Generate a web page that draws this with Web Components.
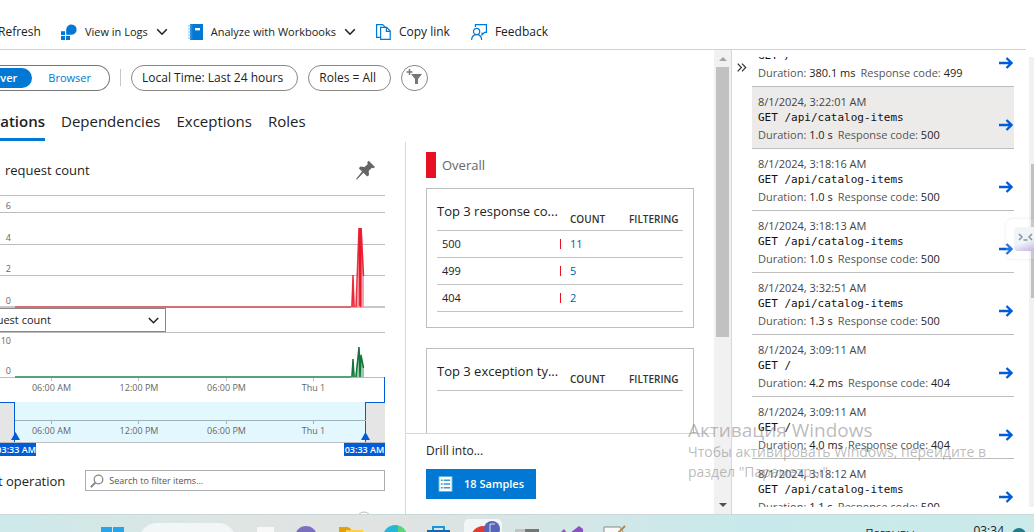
<!DOCTYPE html>
<html lang="en">
<head>
<meta charset="utf-8">
<title>Performance - Application Insights</title>
<style>
  html, body { margin: 0; height: 100%; }
  body { font: 12px/16px "Open Sans", "Noto Sans", sans-serif; color: #222; background: #fff; overflow: hidden; }
</style>
</head>
<body>
<perf-page></perf-page>

<script>
const define = (name, html, init) => customElements.define(name, class extends HTMLElement {
  constructor() {
    super();
    const t = document.createElement('template');
    t.innerHTML = html;
    this.attachShadow({ mode: 'open' }).appendChild(t.content.cloneNode(true));
  }
  connectedCallback() { if (init) init(this, this.shadowRoot); }
});

/* Command bar button: icon slot, label, optional chevron */
define('cmd-button', `
<style>
  :host { display: block; }
  button { display: flex; align-items: center; gap: 8px; padding: 0; border: 0; background: none; font: inherit; color: #222; white-space: nowrap; }
  svg { display: none; }
  :host([menu]) svg { display: block; }
  :host([menu]) { font-size: 11px; }
</style>
<button type="button"><slot name="icon"></slot><slot></slot>
<svg width="12" height="8" viewBox="0 0 12 8"><path d="M1.2 1.3 6 6.2 10.8 1.3" fill="none" stroke="#222" stroke-width="1.6"/></svg></button>`);

define('cmd-bar', `
<style>
  :host { display: block; padding-top: 15px; margin-right: 8px; border-bottom: 1px solid #d2d2d2; }
  nav { display: flex; align-items: center; height: 34px; gap: 20px; margin-left: -2px; }
  svg { display: block; }
  .gap { margin-left: 1px; }
</style>
<nav>
  <cmd-button>Refresh</cmd-button>
  <cmd-button menu><svg slot="icon" width="16" height="16" viewBox="0 0 16 16" fill="#0078d4"><path d="M5.2 5.6A5.2 5.2 0 1 1 10 10.8H5.2z"/><path d="M0 7.2h4V11H0zM0 12h4v4H0zM5 12h4v4H5z"/></svg>View in Logs</cmd-button>
  <cmd-button menu><svg slot="icon" width="15" height="16" viewBox="0 0 15 16"><path d="M2 0h13v16H2z" fill="#0078d4"/><path d="M2 0h2.5v16H2z" fill="#1f88d9"/><path d="M0 2h3M0 5h3M0 8h3M0 11h3M0 14h3" stroke="#6bb6ee" stroke-width="1.2"/><path d="M7 4h5v2.4H7z" fill="#fff"/></svg>Analyze with Workbooks</cmd-button>
  <cmd-button><svg slot="icon" width="15" height="16" viewBox="0 0 15 16" fill="none" stroke="#0078d4" stroke-width="1.2"><path d="M4.5 13.4H.6V.6h6l2.6 2.6"/><path d="M4.6 3.4h6l3.6 3.7v8.3H4.6z"/><path d="M10.4 3.6v3.7h3.8"/></svg>Copy link</cmd-button>
  <cmd-button class="gap"><svg slot="icon" width="16" height="16" viewBox="0 0 16 16" fill="none" stroke="#0078d4" stroke-width="1.2"><path d="M4.4 3V.6h11v7.8h-1.8l-2.6 2.4V8.4"/><circle cx="5.6" cy="7.4" r="3.1"/><path d="M.6 16c.2-3.3 2-5.4 5-5.4s4.900 2.100 5.100 5.400"/></svg>Feedback</cmd-button>
</nav>`);

/* Rounded filter pill */
define('filter-pill', `
<style>
  :host { display: block; }
  button { height: 26px; padding: 0 14px 0 10px; border: 1px solid #8a8886; border-radius: 13px; background: #fff; font: inherit; color: #222; white-space: nowrap; display: flex; align-items: center; }
  :host([round]) button { width: 27px; padding: 0 4px; }
</style>
<button type="button"><slot></slot></button>`);

define('filter-bar', `
<style>
  :host { display: flex; align-items: center; height: 27px; }
  .seg { display: flex; justify-content: flex-end; align-items: center; box-sizing: border-box; width: 110px; height: 26px; padding-right: 2px; border: 1px solid #797775; border-left: 0; border-radius: 0 13px 13px 0; }
  .seg button { height: 20px; border: 0; border-radius: 10px; font: inherit; font-size: 11px; color: #0078d4; background: none; padding: 0 16px; flex: none; }
  .seg button.on { background: #0078d4; color: #fff; font-weight: 600; padding: 0 15px; }
  .bar { width: 1px; height: 17px; background: #c8c6c4; margin: 0 10px; }
  .pills { display: flex; gap: 10px; }
</style>
<div class="seg"><button type="button" class="on">Server</button><button type="button">Browser</button></div>
<div class="bar"></div>
<div class="pills">
  <filter-pill>Local Time: Last 24 hours</filter-pill>
  <filter-pill>Roles = All</filter-pill>
  <filter-pill round aria-label="Add filter"><svg width="17" height="17" viewBox="0 0 17 17" fill="#797775"><path d="M5 5h11l-4 5v5H9v-5z"/><path d="M3.500 0v6M.5 3h6" stroke="#797775" stroke-width="1.500"/></svg></filter-pill>
</div>`);

define('tab-strip', `
<style>
  :host { display: flex; gap: 16px; height: 33px; font-size: 15px; line-height: 24px; }
  a { color: #222; text-decoration: none; height: 29px; border-bottom: 3px solid transparent; }
  a.on { width: 45px; display: flex; justify-content: flex-end; font-weight: 600; border-color: #0078d4; }
</style>
<a class="on" href="#operations">Operations</a><a href="#dependencies">Dependencies</a><a href="#exceptions">Exceptions</a><a href="#roles">Roles</a>`);

/* Charts, time brush and search */
define('charts-panel', `
<style>
  :host { display: block; flex: 1; min-width: 0; padding-right: 20px; overflow: hidden; }
  header { display: flex; align-items: center; justify-content: space-between; box-sizing: border-box; height: 54px; padding: 2px 9px 0 5px; font-size: 13px; border-bottom: 1px solid #bdbdbd; }
  .plot { display: grid; }
  .plot > * { grid-area: 1 / 1; }
  .plot svg { width: 100%; display: block; }
  .big svg { height: 112px; }
  .small { border-top: 1px solid #bdbdbd; }
  .small svg { height: 49px; }
  .y { display: flex; flex-direction: column; justify-content: space-between; width: 11px; text-align: right; align-items: flex-end; font-size: 9px; line-height: 12px; color: #666; }
  .big .y { box-sizing: border-box; padding-top: 4px; height: 111px; }
  .small .y { padding: 2px 0 0; height: 42px; }
  select { display: block; appearance: none; box-sizing: border-box; width: 190px; height: 24px; margin-left: -24px; padding: 0 24px 0 0; border: 1px solid #8a8886; border-radius: 0; font: inherit; color: #222;
    font-size: 11px; background: #fff; }
  .pick { display: grid; width: 166px; }
  .pick > * { grid-area: 1 / 1; }
  .pick svg { justify-self: end; align-self: center; margin-right: 7px; pointer-events: none; }
  .x { display: grid; grid-template-columns: 8fr 87fr 88fr 87fr 87fr 28fr; font-size: 9px; line-height: 12px; color: #666; text-align: center; white-space: nowrap; }
  .x span:first-child { grid-column: 2; }
  .brush { display: grid; grid-template-columns: 15px 1fr 20px; height: 40px; border-bottom: 1px solid #bdbdbd; }
  .brush > div { grid-row: 1; }
  .sel { grid-column: 2; background: #e3f7fe; }
  .l, .r { background: #e5e5e5; border-top: 1px solid #015cda; }
  .l { grid-column: 1; border-right: 1px solid #015cda; }
  .r { grid-column: 3; border-left: 1px solid #015cda; }
  .axis { grid-column: 1 / 4; display: flex; flex-direction: column; justify-content: flex-end; padding-bottom: 5px; }
  .axis svg { display: block; width: 100%; height: 40px; margin-bottom: -17px; }
  .tags { display: flex; justify-content: space-between; height: 13px; }
  .tags span { background: #015cda; color: #fff; font-weight: 600; font-size: 9px; line-height: 13px; width: 41px; text-align: center; white-space: nowrap; }
  .tags span:first-child { width: 36px; display: flex; justify-content: flex-end; }
  .search { display: flex; align-items: center; gap: 20px; margin: 14px 0 0 -2px; font-size: 13px; }
  .box { flex: 1; display: flex; align-items: center; gap: 5px; box-sizing: border-box; height: 21px; border: 1px solid #acacac; padding: 0 4px; }
  .box svg { flex: none; }
  input { flex: 1; min-width: 0; border: 0; padding: 0; outline: 0; font: inherit; font-size: 9px; background: none; }
  input::placeholder { color: #555; opacity: 1; }
  .peek { display: flex; justify-content: flex-end; margin: 20px 13px 0 0; }
</style>
<header>request count
  <svg width="20" height="20" viewBox="0 0 20 20" fill="#666"><path d="M12.700.700 19 7l-1.500 1.300-1.600-.6-3.200 3.200.3 4-1.800 1.700-3.800-3.900L1 19.500 0 19l6-7.400-3.200-3.300 1.600-1.700 4.200.5 3.200-3.200-.6-1.700z"/></svg></header>
<div class="plot big">
  <svg viewBox="0 0 385 112" preserveAspectRatio="none">
    <g fill="#bdbdbd"><path d="M0 16h385v1H0zM0 48h385v1H0zM0 79h385v1H0z"/><path d="M0 110h385v2H0z" fill="#c8c8c8"/></g>
    <path d="M15 110h337v2H15z" fill="#d96b74"/>
    <path d="M351 112 353 79 355 112 357 104 359 32 362 32 364 79V112z" fill="#f5a0aa"/>
    <path d="M352 111 353 79 354 111M356 111 359 32 360.500 111 361 32 363.500 80" fill="none" stroke="#e81123" stroke-width="1.500" opacity=".85"/>
    <path d="M360 32v78" stroke="#e81123" stroke-width="2.500" opacity=".7"/>
  </svg>
  <div class="y"><span>6</span><span>4</span><span>2</span><span>0</span></div>
</div>
<div class="pick">
  <select aria-label="Metric"><option>Request count</option></select>
  <svg width="11" height="7" viewBox="0 0 11 7"><path d="M.8 1 5.500 5.700 10.200 1" fill="none" stroke="#222" stroke-width="1.500"/></svg>
</div>
<div class="plot small">
  <svg viewBox="0 0 385 49" preserveAspectRatio="none">
    <path d="M0 44h385v1H0zM51 45h1v3h-1zM138 45h1v3h-1zM226 45h1v3h-1zM313 45h1v3h-1z" fill="#bdbdbd"/>
    <path d="M15 43h337v2H15z" fill="#56a374"/>
    <path d="M351 45 353 26 355 45 359 14 361 24 364 36V45z" fill="#9bc9ac"/>
    <path d="M352 44 353 26 354 44M356 44 359 14 360 44 361 22 363.500 35" fill="none" stroke="#10763a" stroke-width="1.500"/>
  </svg>
  <div class="y"><span>10</span><span>0</span></div>
</div>
<div class="x"><span>06:00 AM</span><span>12:00 PM</span><span>06:00 PM</span><span>Thu 1</span></div>
<svg width="100%" height="8" viewBox="0 0 385 8" preserveAspectRatio="xMaxYMin meet" style="display:block;height:8px;overflow:visible"><path d="M384.500-17V8.500H365" fill="none" stroke="#015cda"/></svg>
<div class="brush">
  <div class="l"></div><div class="sel"></div><div class="r"></div>
  <div class="axis">
    <svg viewBox="0 0 385 40" preserveAspectRatio="none"><path d="M15 18h351v1H15zM51 19h1v3h-1zM138 19h1v3h-1zM226 19h1v3h-1zM313 19h1v3h-1z" fill="#9db4bb"/><path d="M11 38 15.500 30 20 38zM361 38 365.500 30 370 38z" fill="#015cda"/></svg>
    <div class="x"><span>06:00 AM</span><span>12:00 PM</span><span>06:00 PM</span><span>Thu 1</span></div>
  </div>
</div>
<div class="tags"><span>03:33 AM</span><span>03:33 AM</span></div>
<div class="search"><label for="q">t operation</label>
  <div class="box"><svg width="14" height="14" viewBox="0 0 14 14" fill="none" stroke="#888"><circle cx="8.500" cy="5.500" r="4.300" stroke-width="1.300"/><path d="M5.400 8.600.8 13.200" stroke-width="2"/></svg><input id="q" type="search" placeholder="Search to filter items..."></div></div>
<div class="peek"><svg width="16" height="16" viewBox="0 0 16 16"><circle cx="8" cy="8" r="7" fill="none" stroke="#bbb"/></svg></div>`);

/* Card with a top-3 table */
define('top-card', `
<style>
  :host { display: block; border: 1px solid #bdbdbd; padding: 3px 10px 15px; }
  table { width: 100%; border-collapse: collapse; table-layout: fixed; font-size: 11px; }
  th { text-align: left; padding: 0; height: 32px; font-size: 10px; font-weight: 600; color: #333; vertical-align: bottom; border-bottom: 1px solid #c4c4c4; line-height: 22px; }
  th:first-child { width: 133px; font-size: 13px; font-weight: 400; color: #222; line-height: 38px; white-space: nowrap; }
  th:last-child { width: 54px; }
  td { height: 26px; padding: 0; border-bottom: 1px solid #c4c4c4; }
  td:first-child { padding-left: 5px; }
  td div { display: flex; justify-content: space-between; align-items: center; }
  i { width: 1px; height: 10px; background: #e81123; margin-right: 9px; }
  a { color: #015cb0; text-decoration: none; }
</style>
<table><thead><tr><th></th><th>COUNT</th><th>FILTERING</th></tr></thead><tbody></tbody></table>`,
(host, root) => {
  root.querySelector('th').textContent = host.getAttribute('heading');
  root.querySelector('tbody').innerHTML = (host.getAttribute('rows') || '').split(',').filter(Boolean).map(r => {
    const [code, n] = r.split(':');
    return `<tr><td><div>${code}<i></i></div></td><td><a href="#${code}">${n}</a></td><td></td></tr>`;
  }).join('');
});

define('insight-panel', `
<style>
  :host { display: flex; flex-direction: column; width: 308px; border-left: 1px solid #d8d8d8; }
  .scroll { flex: 1; min-height: 0; overflow: hidden; padding: 10px 20px 0; }
  .overall { display: flex; align-items: center; gap: 6px; font-size: 13px; color: #666; margin-bottom: 10px; }
  .overall i { width: 10px; height: 26px; background: #e81123; }
  top-card { margin-bottom: 20px; }
  .tall { height: 160px; }
  footer { border-top: 1px solid #d8d8d8; padding: 9px 20px 15px; }
  button { display: flex; align-items: center; gap: 11px; height: 30px; width: 110px; margin-top: 10px; padding: 0 12px; border: 0; background: #0078d4; color: #fff; font: inherit; font-size: 11px; font-weight: 600; white-space: nowrap; }
</style>
<div class="scroll">
  <div class="overall"><i></i>Overall</div>
  <top-card heading="Top 3 response co..." rows="500:11,499:5,404:2"></top-card>
  <top-card class="tall" heading="Top 3 exception ty..."></top-card>
</div>
<footer>Drill into...
  <button type="button"><svg width="16" height="18" viewBox="0 0 16 18"><path d="M1 1h14v16H1z" fill="#fff" stroke="#59b4d9"/><path d="M3 5h2M3 9h2M3 13h2M6 5h7M6 9h7M6 13h7" stroke="#3a9bd0" stroke-width="1.500"/></svg>18 Samples</button>
</footer>`);

define('scroll-track', `
<style>
  :host { display: flex; flex-direction: column; align-items: center; box-sizing: border-box; width: 17px; background: #f1f1f1; padding: 6px 0; }
  div { width: 13px; height: 270px; background: #c1c1c1; margin: 5px 0 auto; }
  svg { display: block; }
</style>
<svg width="8" height="6" viewBox="0 0 8 6"><path d="M0 5 4 1 8 5z" fill="#a3a3a3"/></svg><div></div>
<svg width="8" height="6" viewBox="0 0 8 6"><path d="M0 1h8L4 5z" fill="#505050"/></svg>`);

/* One sampled request */
define('sample-row', `
<style>
  :host { display: flex; align-items: center; box-sizing: border-box; height: 62px; padding: 6px 1px 5px 6px; border-bottom: 1px solid #bdbdbd; font-size: 11px; color: #222; }
  :host([selected]) { background: #edebe9; }
  .body { flex: 1; }
  time, code, .meta { display: block; height: 16px; line-height: 16px; white-space: pre; }
  span { color: #555; }
  time { color: #444; }
  code { font-family: "DejaVu Sans Mono", monospace; color: #111; height: 17px; line-height: 15px; }
  .meta { display: flex; gap: 5px; }
  b { font-weight: 400; }
  a { display: block; padding-top: 14px; }
  svg { display: block; }
</style>
<div class="body"><time></time><code></code><div class="meta"><div><span>Duration:</span> <b></b></div><div><span>Response code:</span> <b></b></div></div></div>
<a href="#sample" aria-label="Open sample"><svg width="14" height="12" viewBox="0 0 14 12"><path d="M0 6h12M7.500 1 12.500 6 7.500 11" fill="none" stroke="#015cda" stroke-width="2.300"/></svg></a>`,
(host, root) => {
  const [time, op, dur, code] = host.getAttribute('data').split('|');
  root.querySelector('time').textContent = time;
  root.querySelector('code').textContent = op;
  const b = root.querySelectorAll('b');
  b[0].textContent = dur;
  b[1].textContent = code;
});

define('sample-list', `
<style>
  :host { display: flex; box-sizing: border-box; width: 303px; border-left: 1px solid #d8d8d8; padding: 7px 0 7px 3px; }
  .fold { align-self: flex-start; width: 13px; margin: 6px 4px 0 0; padding: 0; border: 0; background: none; font-size: 0; }
  .view { flex: 1; overflow: hidden; }
  .rows { margin-top: -32px; }
  .rail { width: 5px; margin-left: 15px; background: #f1f1f1; }
  .rail div { height: 134px; margin: 107px 0 0 2px; background: #c1c1c1; }
</style>
<button class="fold" type="button" aria-label="Collapse"><svg width="10" height="9" viewBox="0 0 10 9"><path d="M.7.6 4.400 4.500.7 8.400M5 .6 8.700 4.500 5 8.400" fill="none" stroke="#333" stroke-width="1.200"/></svg></button>
<div class="view"><div class="rows">
  <sample-row data="8/1/2024, 3:33:02 AM|GET /|380.1 ms|499"></sample-row>
  <sample-row selected data="8/1/2024, 3:22:01 AM|GET /api/catalog-items|1.0 s|500"></sample-row>
  <sample-row data="8/1/2024, 3:18:16 AM|GET /api/catalog-items|1.0 s|500"></sample-row>
  <sample-row data="8/1/2024, 3:18:13 AM|GET /api/catalog-items|1.0 s|500"></sample-row>
  <sample-row data="8/1/2024, 3:32:51 AM|GET /api/catalog-items|1.3 s|500"></sample-row>
  <sample-row data="8/1/2024, 3:09:11 AM|GET /|4.2 ms|404"></sample-row>
  <sample-row data="8/1/2024, 3:09:11 AM|GET /|4.0 ms|404"></sample-row>
  <sample-row data="8/1/2024, 3:18:12 AM|GET /api/catalog-items|1.1 s|500"></sample-row>
</div></div>
<div class="rail"><div></div></div>`);

/* Taskbar, only its top edge is on screen */
define('task-bar', `
<style>
  :host { display: flex; align-items: flex-start; box-sizing: border-box; height: 18px; overflow: hidden; padding-left: 101px; border-top: 1px solid #c9d8d8;
    background: linear-gradient(90deg, #cde9ea, #dfe5e3 24%, #e0e3e1 38%, #d6e6e6 52%, #c8e9eb 72%, #cbeaea); }
  svg { display: block; flex: none; }
  .win { margin-top: 12px; }
  .find { width: 97px; height: 36px; margin: 8px 0 0 15px; border-radius: 18px; background: #f2f6f6; flex: none; }
  .apps { margin-left: 20px; }
  .tray { margin-left: auto; display: flex; gap: 50px; padding: 8px 8px 0 0; color: #222; white-space: nowrap; }
  .tray svg { margin: 3px 0 0 -42px; }
  .tray span:first-child { font-size: 11px; padding-top: 2px; }
</style>
<svg class="win" width="23" height="23" viewBox="0 0 23 23"><path d="M0 0h11v11H0zM12 0h11v11H12z" fill="#27a4ea"/></svg>
<div class="find"></div>
<svg class="apps" width="376" height="18" viewBox="256 0 376 18">
  <rect x="257" y="12" width="17" height="12" fill="#f8f8f8"/>
  <circle cx="306" cy="22" r="11" fill="#7b6fc0"/>
  <path d="M339 12h9l3 2v4h-12z" fill="#e3a008"/><path d="M346 15h17v6h-17z" fill="#ffcf48"/>
  <circle cx="395" cy="22" r="12" fill="#27b5d8"/><path d="M398 10.400A12 12 0 0 1 407 22h-9z" fill="#55d678"/>
  <path d="M433 18v-6h11v6" fill="none" stroke="#1697e0" stroke-width="2"/><path d="M427 15h23v6h-23z" fill="#1269ad"/>
  <rect x="464" y="4" width="38" height="30" rx="5" fill="#f3f6f6"/>
  <circle cx="483" cy="23" r="12" fill="#e33b2e"/><circle cx="492" cy="14" r="8" fill="#5765b8"/><path d="M490 18v-9h5" fill="none" stroke="#fff" opacity=".8"/>
  <path d="M515 14h10v6h-10z" fill="#c3c3c3"/><path d="M525 14h14v6h-14z" fill="#777"/>
  <path d="M560 18l4-4 3 4zM570 18l9-7 4 3v6z" fill="#8a54c0"/>
  <path d="M604 20V12h16l5 8z" fill="#fafafa" stroke="#888"/><path d="M616 20 625 11" stroke="#b58a3a" stroke-width="2"/>
</svg>
<div class="tray"><span>Погрывы...</span><span>03:34</span><svg width="14" height="14" viewBox="0 0 14 14"><circle cx="7" cy="9" r="7" fill="#1f7c88"/></svg></div>`);

/* Operating-system activation notice, laid over the page */
define('activation-note', `
<style>
  :host { display: block; position: absolute; right: 26px; bottom: 50px; width: 320px; color: rgba(130, 130, 130, .55); pointer-events: none; font-size: 14px; line-height: 20px; white-space: pre-line; }
  strong { display: block; font-weight: 400; font-size: 19px; line-height: 24px; }
</style>
<strong>Активация Windows</strong><span>Чтобы активировать Windows, перейдите в
раздел "Параметры".</span>`);

/* Translator tab pinned to the window edge */
define('edge-tab', `
<style>
  :host { position: absolute; right: 0; top: 219px; box-sizing: border-box; width: 28px; height: 40px; padding: 8px 0 8px 8px; border-radius: 6px 0 0 6px; background: rgba(255, 255, 255, .15); box-shadow: 0 0 3px rgba(0, 0, 0, .1); }
  div { height: 24px; border-radius: 4px 0 0 4px; background: linear-gradient(160deg, #eef4f8 60%, #c9b2e0); overflow: hidden; }
</style>
<div><svg width="20" height="24" viewBox="0 0 20 24" fill="none" stroke="#8b93a0" stroke-width="1.500"><path d="M5 7l3 3-3 3M9.500 13h4M18 7l-3 3 3 3"/></svg></div>`);

define('perf-page', `
<style>
  :host { display: flex; flex-direction: column; height: 100vh; position: relative; overflow: hidden; }
  main { flex: 1; min-height: 0; display: flex; }
  .work { flex: 1; min-width: 0; display: flex; flex-direction: column; }
  filter-bar { margin-top: 14px; }
  tab-strip { margin-top: 18px; }
  .cols { flex: 1; min-height: 0; display: flex; }
</style>
<cmd-bar></cmd-bar>
<main>
  <div class="work"><filter-bar></filter-bar><tab-strip></tab-strip>
    <div class="cols"><charts-panel></charts-panel><insight-panel></insight-panel></div></div>
  <scroll-track></scroll-track>
  <sample-list></sample-list>
</main>
<task-bar></task-bar>
<activation-note></activation-note>
<edge-tab></edge-tab>`);
</script>
</body>
</html>
